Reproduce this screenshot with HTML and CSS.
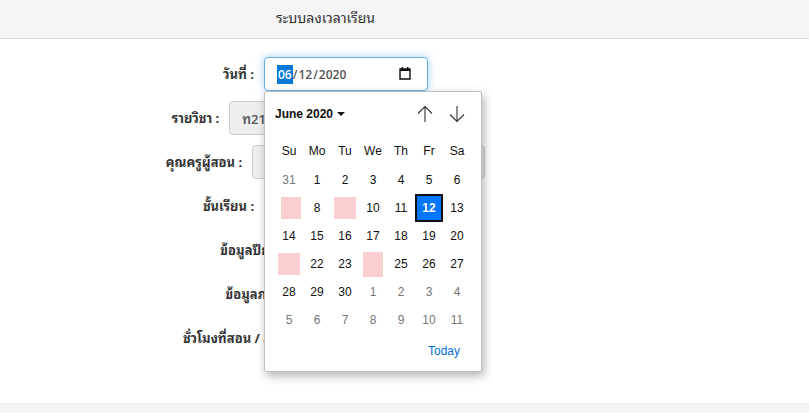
FILE: index.html
```html
<!DOCTYPE html>
<html lang="th">
<head>
  <meta charset="utf-8">
  <title>ระบบลงเวลาเรียน</title>
  <meta name="viewport" content="width=device-width, initial-scale=1.0">
  <link rel="stylesheet" href="styles.css">
</head>
<body>
  <header class="page-header">
    <h1>ระบบลงเวลาเรียน</h1>
  </header>
  <main class="panel">
    <form class="attendance-form">
      <div class="form-row">
        <label for="date">วันที่ :</label>
        <div class="date-field">
          <input type="date" id="date" class="form-control date-input" value="2020-06-12">
          <svg class="date-icon" viewBox="0 0 12 13" width="12" height="13" aria-hidden="true">
            <path d="M1 2h10v10H1z" fill="none" stroke="#111" stroke-width="1.4"/>
            <path d="M1 2h10v2H1zM2.500 0h1.500v2H2.500zM8 0h1.500v2H8z" fill="#111"/>
          </svg>
          <div class="calendar">
            <div class="calendar-header">
              <button type="button" class="month-button">June 2020 <span class="caret"></span></button>
              <div class="calendar-nav">
                <button type="button" aria-label="Previous month">
                  <svg viewBox="0 0 16 18" width="16" height="18"><path d="M8 17V1.500M1 8.500l7-7 7 7"/></svg>
                </button>
                <button type="button" aria-label="Next month">
                  <svg viewBox="0 0 16 18" width="16" height="18"><path d="M8 1v15.500M1 9.500l7 7 7-7"/></svg>
                </button>
              </div>
            </div>
            <table class="days">
              <thead>
                <tr><th>Su</th><th>Mo</th><th>Tu</th><th>We</th><th>Th</th><th>Fr</th><th>Sa</th></tr>
              </thead>
              <tbody>
                <tr><td class="other">31</td><td>1</td><td>2</td><td>3</td><td>4</td><td>5</td><td>6</td></tr>
                <tr><td><span class="mark mark-end"></span></td><td>8</td><td><span class="mark mark-wide"></span></td><td>10</td><td>11</td><td class="selected">12</td><td>13</td></tr>
                <tr><td>14</td><td>15</td><td>16</td><td>17</td><td>18</td><td>19</td><td>20</td></tr>
                <tr><td><span class="mark mark-wide"></span></td><td>22</td><td>23</td><td><span class="mark mark-tall"></span></td><td>25</td><td>26</td><td>27</td></tr>
                <tr><td>28</td><td>29</td><td>30</td><td class="other">1</td><td class="other">2</td><td class="other">3</td><td class="other">4</td></tr>
                <tr><td class="other">5</td><td class="other">6</td><td class="other">7</td><td class="other">8</td><td class="other">9</td><td class="other">10</td><td class="other">11</td></tr>
              </tbody>
            </table>
            <div class="calendar-footer">
              <button type="button" class="today">Today</button>
            </div>
          </div>
        </div>
      </div>
      <div class="form-row">
        <label for="subject">รายวิชา :</label>
        <input type="text" id="subject" class="form-control subject-input" value="ท21101" disabled>
      </div>
      <div class="form-row">
        <label for="teacher">คุณครูผู้สอน :</label>
        <input type="text" id="teacher" class="form-control teacher-input" disabled>
      </div>
      <div class="form-row">
        <label for="room">ชั้นเรียน :</label>
        <select id="room" class="form-control room-select"></select>
      </div>
      <div class="form-row">
        <label for="year">ข้อมูลปีการศึกษา :</label>
        <select id="year" class="form-control year-select"></select>
      </div>
      <div class="form-row">
        <label for="term">ข้อมูลภาคเรียน :</label>
        <select id="term" class="form-control year-select"></select>
      </div>
      <div class="form-row">
        <label for="hours">ชั่วโมงที่สอน / สัปดาห์ :</label>
        <select id="hours" class="form-control hours-select"></select>
      </div>
    </form>
  </main>
</body>
</html>
```
FILE: styles.css
```css
* {
  box-sizing: border-box;
}

body {
  margin: 0;
  min-height: 100vh;
  background-color: #f4f4f4;
  color: #333;
  font-family: "Open Sans", "Noto Sans Thai Looped", "Leelawadee UI", Loma, Waree, Garuda, Tahoma, sans-serif;
  font-size: 13px;
}

.page-header {
  padding: 8px 158px 10px 0;
  border-bottom: 1px solid #ddd;
}

.page-header h1 {
  margin: 0;
  font-size: 14px;
  font-weight: 400;
  line-height: 20px;
  text-align: center;
}

.panel {
  padding: 18px 158px 48px 0;
  background-color: #fff;
}

.attendance-form {
  display: flex;
  flex-direction: column;
  gap: 10px;
}

.form-row {
  display: flex;
  justify-content: center;
  align-items: center;
  gap: 10px;
  height: 34px;
}

.form-row label {
  padding-bottom: 2px;
  font-weight: 700;
  white-space: nowrap;
}

.form-control {
  height: 34px;
  padding: 6px 12px;
  border: 1px solid #ccc;
  border-radius: 4px;
  background-color: #fff;
  color: #555;
  font-family: inherit;
  font-size: 12px;
  font-weight: 600;
}

.form-control:disabled {
  background-color: #eee;
}

.subject-input {
  width: 250px;
  font-size: 13px;
}

.teacher-input {
  width: 233px;
}

.room-select {
  width: 184px;
}

.year-select {
  width: 100px;
}

.hours-select {
  width: 148px;
}

.date-field {
  position: relative;
}

.date-input {
  display: block;
  width: 164px;
  border-color: #66afe9;
  box-shadow: 0 0 8px rgba(102, 175, 233, 0.6);
  outline: 0;
}

.date-input::-webkit-datetime-edit-month-field {
  background-color: #0078d7;
  color: #fff;
}

.date-input::-webkit-calendar-picker-indicator {
  opacity: 0;
}

.date-icon {
  position: absolute;
  top: 10px;
  right: 17px;
  pointer-events: none;
}

.calendar {
  position: absolute;
  z-index: 1;
  top: 100%;
  left: 0;
  width: 218px;
  border: 1px solid #bfbfbf;
  border-radius: 2px;
  background-color: #fff;
  box-shadow: 2px 4px 10px rgba(0, 0, 0, 0.3);
  color: #101010;
  font-family: "Liberation Sans", Arial, sans-serif;
  font-size: 12px;
}

.calendar button {
  padding: 0;
  border: 0;
  background: none;
  color: inherit;
  font-family: inherit;
  font-size: 12px;
  cursor: pointer;
}

.calendar-header {
  display: flex;
  justify-content: space-between;
  align-items: center;
  height: 44px;
  padding: 0 16px 0 10px;
}

.calendar .month-button {
  display: flex;
  align-items: center;
  gap: 4px;
  font-weight: 700;
}

.caret {
  border-top: 4px solid #101010;
  border-left: 4px solid transparent;
  border-right: 4px solid transparent;
}

.calendar-nav {
  display: flex;
  gap: 16px;
}

.calendar-nav svg {
  display: block;
  fill: none;
  stroke: #333;
  stroke-width: 1.1;
}

.days {
  margin: 0 10px;
  border-collapse: collapse;
  table-layout: fixed;
  width: 196px;
}

.days th,
.days td {
  width: 28px;
  height: 28px;
  padding: 0;
  font-weight: 400;
  text-align: center;
}

.days th {
  height: 30px;
}

.days .other {
  color: #767676;
}

.days .selected {
  background-color: #0075ff;
  box-shadow: inset 0 0 0 2px #101010;
  color: #fff;
  font-weight: 700;
}

.mark {
  display: block;
  width: 20px;
  height: 22px;
  margin: 0 auto;
  background-color: #fbced0;
}

.mark-end {
  margin-right: 2px;
}

.mark-wide {
  width: 22px;
}

.mark-tall {
  height: 25px;
}

.calendar-footer {
  display: flex;
  justify-content: flex-end;
  padding: 10px 21px 13px;
}

.calendar .today {
  color: #0070d8;
  line-height: 14px;
}
```
